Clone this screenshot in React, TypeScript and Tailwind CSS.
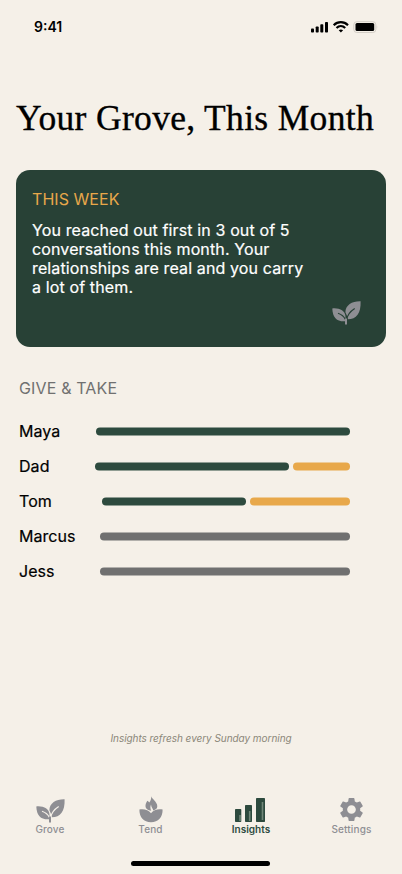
import { MdSettings } from 'react-icons/md'

interface Balance {
  name: string
  offset: string
  segments: string[]
}

const balances: Balance[] = [
  { name: 'Maya', offset: 'w-[77px]', segments: ['w-[254px] bg-[#2d4a3e]'] },
  { name: 'Dad', offset: 'w-[76px]', segments: ['w-[194px] bg-[#2d4a3e]', 'w-[57px] bg-[#e8a84a]'] },
  { name: 'Tom', offset: 'w-[83px]', segments: ['w-36 bg-[#2d4a3e]', 'w-[100px] bg-[#e8a84a]'] },
  { name: 'Marcus', offset: 'w-[81px]', segments: ['w-[250px] bg-[#707070]'] },
  { name: 'Jess', offset: 'w-[81px]', segments: ['w-[250px] bg-[#707070]'] },
]

function SproutIcon({ vein }: { vein: string }) {
  return (
    <svg viewBox="0 0 29 24" className="w-[29px] h-6" fill="none">
      <path d="M0.3 7.4C7.5 6.8 13 9.5 13.5 15.5V20.2C5.5 21 0.6 17 0.3 7.4Z" fill="#8e8e93" />
      <path d="M28.6 0.3C20.5 0 13.4 4 13.4 11.2C13.8 12.4 14.3 13.3 14.8 14.3L15.8 18.3C24.5 18.3 29 12.5 28.6 0.3Z" fill="#8e8e93" />
      <path d="M6 12.2C9 13.2 12 15.2 13.4 18.5" stroke={vein} strokeWidth="1.1" />
      <path d="M22.7 7.5C18.5 10.2 15.3 13.2 14.6 19" stroke={vein} strokeWidth="1.2" />
      <path d="M14 23.5V17.5" stroke="#8e8e93" strokeWidth="2" />
    </svg>
  )
}

function TendIcon() {
  return (
    <svg viewBox="0 0 24 27" className="w-6 h-[27px]" fill="#8e8e93">
      <path d="M12.2 0.3C12.7 2.6 18.3 6 18.3 10.2C18.3 12.2 16.8 13.8 14.2 14.5C14.2 12.5 12.2 11.6 12 8.5C11 10.8 11.4 13 12.3 14.8C9 14.5 6.3 12.7 6.5 9.5C6.6 7.2 7.8 6 8.2 4.8C9.2 5.1 9.8 5.7 10.2 6.6C11.7 5 12.3 2.7 12.2 0.3Z" />
      <path d="M0.4 13.4C4.8 12.6 9.5 13.6 12 17.2C14.5 13.6 19.2 12.6 23.6 13.4C23.8 21 19.2 26.2 12 26.2C4.8 26.2 0.2 21 0.4 13.4Z" />
    </svg>
  )
}

function InsightsIcon() {
  return (
    <svg viewBox="0 0 31 25" className="w-[31px] h-[25px]" fill="#2d4a3e">
      <rect x="0" y="11" width="6.3" height="13" rx="0.7" />
      <rect x="10" y="7" width="7" height="17" rx="0.7" />
      <rect x="21" y="0" width="9" height="24" rx="0.7" />
      <path d="M5 17v6M14.7 13v10M27.5 4v18" stroke="#718779" strokeWidth="1.6" />
    </svg>
  )
}

function StatusBar() {
  return (
    <div className="flex h-[54px] justify-between pl-[34px] pr-[24px]">
      <span className="pt-[18px] text-[14px] leading-[18px] font-semibold">9:41</span>
      <svg viewBox="0 0 67 14" className="mt-5 w-[67px] h-3.5">
        <rect x="0" y="8.5" width="3" height="4" rx="0.8" />
        <rect x="4.7" y="6.5" width="3" height="6" rx="0.8" />
        <rect x="9.3" y="4.3" width="3" height="8.2" rx="0.8" />
        <rect x="14" y="2" width="3" height="10.5" rx="0.8" />
        <g fill="none" stroke="#000" strokeWidth="2.2">
          <path d="M22.7 5.2C26.8 1.2 32.9 1.2 37 5.2" />
          <path d="M25.5 8C28 5.6 31.7 5.6 34.2 8" />
        </g>
        <path d="M27.7 10.2Q29.9 8.6 32.1 10.2L29.9 12.5Z" />
        <rect x="42.8" y="1.7" width="22" height="10.8" rx="3" fill="none" stroke="#d3cec6" />
        <rect x="44.5" y="3.1" width="18.7" height="8" rx="1.5" />
        <path d="M65.7 5.2Q67 7 65.7 9Z" fill="#d3cec6" />
      </svg>
    </div>
  )
}

export default function App() {
  return (
    <div className="flex h-[874px] w-[402px] flex-col overflow-hidden bg-[#f5f0e8] font-['Inter',sans-serif] text-black">
      <StatusBar />

      <h1 className="mt-11 h-10 pl-4 font-['Liberation_Serif',serif] text-[35.5px] leading-10 tracking-[0.33px] whitespace-nowrap [-webkit-text-stroke:0.35px_black]">
        Your Grove, This Month
      </h1>

      <section className="mx-4 mt-8 flex h-[177px] flex-col rounded-[14px] bg-[#284136] px-4 pt-5">
        <h2 className="text-[16px] leading-[19px] tracking-[0.05px] text-[#e8a84a]">THIS WEEK</h2>
        <p className="mt-3 text-[16px] leading-[19px] tracking-[0.13px] text-white [-webkit-text-stroke:0.2px_white]">
          You reached out first in 3 out of 5<br />
          conversations this month. Your<br />
          relationships are real and you carry<br />
          a lot of them.
        </p>
        <div className="mt-1 flex justify-end pr-[9px]">
          <SproutIcon vein="#284136" />
        </div>
      </section>

      <section className="mt-8 pl-[19px]">
        <h2 className="text-[16px] leading-[19px] tracking-[0.15px] text-[#707070]">GIVE &amp; TAKE</h2>
        <ul className="mt-4">
          {balances.map(({ name, offset, segments }) => (
            <li key={name} className="flex h-[35px] items-center">
              <span className={`${offset} shrink-0 text-[16px] leading-[19px] tracking-[0.05px] [-webkit-text-stroke:0.2px_black]`}>{name}</span>
              <div className="flex translate-y-[0.5px] gap-1 pb-px">
                {segments.map((segment) => (
                  <div key={segment} className={`h-2 rounded-full ${segment}`} />
                ))}
              </div>
            </li>
          ))}
        </ul>
      </section>

      <p className="mt-[143px] text-center text-[10px] leading-3 tracking-[-0.05px] text-[#8b8779] italic">
        Insights refresh every Sunday morning
      </p>

      <nav className="mt-[52px] flex h-10 text-[10px] leading-3 font-medium tracking-[0.15px] text-[#8e8e93]">
        <div className="flex w-[100px] flex-col items-center">
          <div className="flex h-[27px] items-end"><SproutIcon vein="#f5f0e8" /></div>
          <span>Grove</span>
        </div>
        <div className="flex w-[101px] flex-col items-center">
          <TendIcon />
          <span>Tend</span>
        </div>
        <div className="flex w-[100px] flex-col items-center font-semibold tracking-normal text-[#2d4a3e]">
          <div className="flex h-[27px] items-end pr-[2px]"><InsightsIcon /></div>
          <span>Insights</span>
        </div>
        <div className="flex w-[101px] flex-col items-center">
          <div className="flex h-[27px] items-center"><MdSettings size={29} /></div>
          <span>Settings</span>
        </div>
      </nav>

      <div className="mt-[25px] ml-[131px] h-[5px] w-[139px] rounded-full bg-black" />
    </div>
  )
}
